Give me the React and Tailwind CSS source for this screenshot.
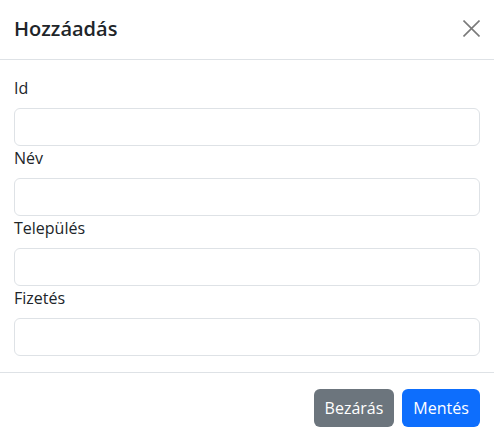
import React from "react";

const fields = ["Id", "Név", "Település", "Fizetés"];

export default function App() {
  return (
    <div className="w-[494px] h-[441px] bg-white text-[#212529] font-['Open_Sans',sans-serif] overflow-hidden">
      <div className="h-[60px] flex items-center justify-between px-[14px] border-b border-[#dee2e6]">
        <h5 className="text-[20px] font-semibold leading-[30px] -mt-[2px]">Hozzáadás</h5>
        <button className="text-[#7a7a7a] -mt-[2px]">
          <svg width="17" height="17" viewBox="0 0 17 17" fill="none" stroke="currentColor" strokeWidth="1.6">
            <path d="M0.5 0.5L16.5 16.5M16.5 0.5L0.5 16.5" />
          </svg>
        </button>
      </div>

      <div className="px-[14px] pt-4 pb-4">
        {fields.map((f) => (
          <div key={f}>
            <label className="block text-[16px] leading-6 mb-2">{f}</label>
            <input
              type="text"
              className="block w-full h-[38px] rounded-md border border-[#dee2e6] px-3 outline-none"
            />
          </div>
        ))}
      </div>

      <div className="flex justify-end gap-2 px-[14px] pt-4 border-t border-[#dee2e6]">
        <button className="h-[38px] w-[80px] rounded-md bg-[#6c757d] text-white text-[16px]">
          Bezárás
        </button>
        <button className="h-[38px] w-[78px] rounded-md bg-[#0d6efd] text-white text-[16px]">
          Mentés
        </button>
      </div>
    </div>
  );
}
